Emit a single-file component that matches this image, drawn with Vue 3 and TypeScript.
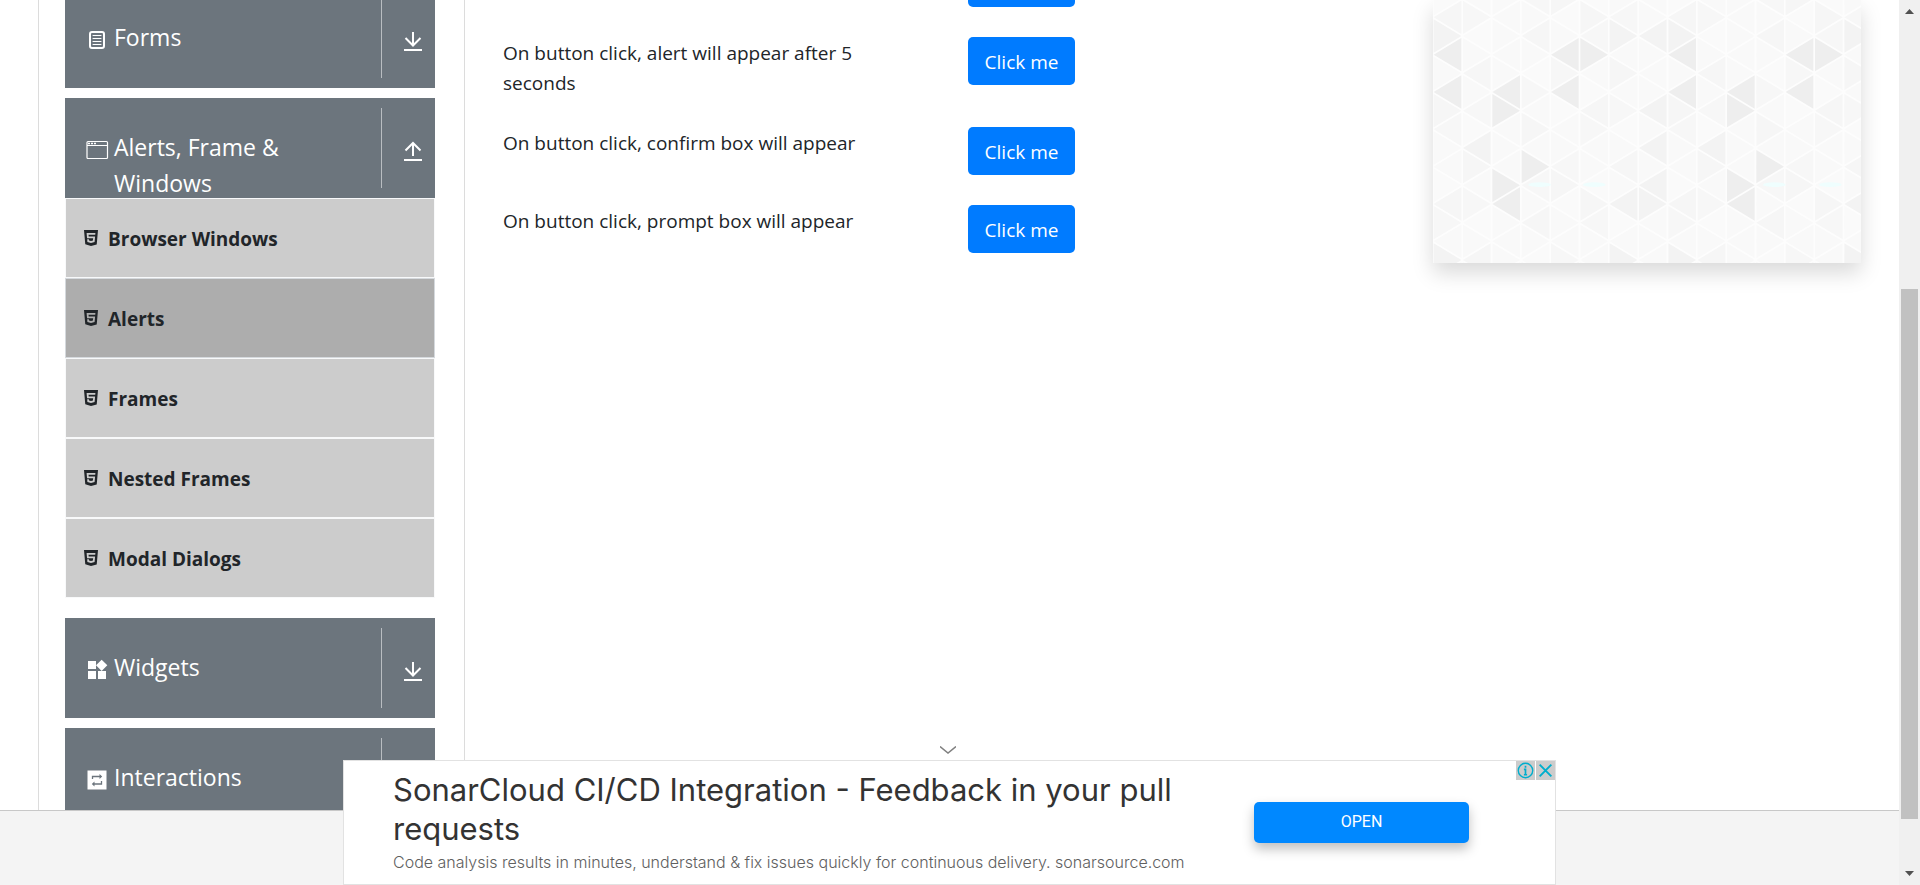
<script setup lang="ts">
import { ref } from 'vue'

type Icon = 'form' | 'window' | 'widgets' | 'repeat'

interface Group {
  title: string
  icon: Icon
  items: string[]
}

const groups: Group[] = [
  { title: 'Forms', icon: 'form', items: [] },
  {
    title: 'Alerts, Frame & Windows',
    icon: 'window',
    items: ['Browser Windows', 'Alerts', 'Frames', 'Nested Frames', 'Modal Dialogs'],
  },
  { title: 'Widgets', icon: 'widgets', items: [] },
  { title: 'Interactions', icon: 'repeat', items: [] },
]

const active = ref('Alerts')

const rows = [
  { id: 'timerAlert', text: 'On button click, alert will appear after 5 seconds' },
  { id: 'confirm', text: 'On button click, confirm box will appear' },
  { id: 'prompt', text: 'On button click, prompt box will appear' },
]

// Triangle mosaic: eight columns form one repeating tile.
const strong = ['0-3', '4-3', '5-3', '0-5', '2-5', '2-6', '4-5', '3-9', '2-10', '2-11']
const medium = ['6-2', '7-2', '0-2', '7-6', '1-8', '7-8', '7-10', '6-11', '7-11', '6-14', '0-14']
const shades = ['#fafafa', '#f7f7f7', '#f9f9f9', '#f6f6f6', '#f9f9f9']
const glints = [320, 484, 1024, 1192]
const cellW = 88
const cellH = 56

const triangles: { points: string; fill: string }[] = []
for (let c = 0; c < 15; c++) {
  for (let r = 0; r < 16; r++) {
    const k = `${c % 8}-${r}`
    const x = c * cellW
    const y = r * cellH - 4
    const points =
      (c + r) % 2
        ? `${x + 2},${y} ${x + 85},${y - 50} ${x + 85},${y + 50}`
        : `${x + 85},${y} ${x + 2},${y - 50} ${x + 2},${y + 50}`
    const fill = strong.includes(k)
      ? '#eeeeee'
      : medium.includes(k)
        ? '#f3f3f3'
        : shades[((c % 8) * 7 + r * 3 + (c % 8) * r) % 5]
    triangles.push({ points, fill })
  }
}
</script>

<template>
  <div class="window">
    <div class="page">
      <main class="body">
        <nav class="sidebar">
          <section v-for="g in groups" :key="g.title" class="group">
            <button class="head" type="button">
              <svg v-if="g.icon === 'form'" class="icon" viewBox="0 0 24 24" fill="none" stroke="#fff">
                <rect x="5" y="4" width="14" height="16" rx="2" stroke-width="2" />
                <path d="M8 7.5h8M8 10.5h8M8 13.5h8M8 16.5h8" stroke-width="1" stroke-linecap="round" />
              </svg>
              <svg v-else-if="g.icon === 'window'" class="icon" viewBox="0 0 24 24" fill="none" stroke="#fff">
                <rect x="2" y="3.5" width="20.500" height="17" rx="1" stroke-width="1.200" />
                <path d="M2 7.500h20" />
                <path d="M3 5.500h2M6 5.500h2M9 5.500h2" stroke-width="1.600" />
              </svg>
              <svg v-else-if="g.icon === 'widgets'" class="icon" viewBox="0 0 24 24" fill="#fff">
                <path d="M13 13v8h8v-8h-8zM3 21h8v-8H3v8zM3 3v8h8V3H3zm13.66-1.31L11 7.34 16.66 13l5.66-5.66-5.66-5.65z" />
              </svg>
              <svg v-else class="icon" viewBox="0 0 24 24" fill="none">
                <rect x="2.500" y="2.500" width="19" height="19" fill="#fff" />
                <path d="M7.500 11V8.500h8M16.500 13v3h-8" stroke="#6c757d" stroke-width="1.300" />
                <path d="M14.500 6l2.700 2.500-2.700 2.500zM9.500 13.500L6.800 16l2.700 2.500z" fill="#6c757d" />
              </svg>
              <span class="title">{{ g.title }}</span>
              <span class="toggle">
                <svg viewBox="0 0 20 20" fill="none" stroke="#fff" stroke-width="2">
                  <path v-if="g.items.length" d="M10 15V2M2.500 9.500L10 2l7.500 7.500M1 19h18" />
                  <path v-else d="M10 1v13M2.500 7l7.500 7.500L17.500 7M1 19h18" />
                </svg>
              </span>
            </button>
            <ul v-if="g.items.length" class="items">
              <li v-for="item in g.items" :key="item">
                <a href="#" :class="{ active: item === active }" @click.prevent="active = item">
                  <svg viewBox="0 0 24 24" fill="#212529">
                    <path d="M1.500 0h21l-1.910 21.563L11.977 24l-8.564-2.438L1.500 0zm7.031 9.750l-.232-2.718 10.059.003.230-2.622L5.412 4.410l.698 8.010h9.126l-.326 3.426-2.910.804-2.955-.810-.188-2.110H6.248l.330 4.171L12 19.351l5.379-1.443.744-8.157H8.531z" />
                  </svg>
                  <span>{{ item }}</span>
                </a>
              </li>
            </ul>
          </section>
        </nav>

        <section class="content">
          <button class="btn previous" type="button" aria-label="Show alert"></button>
          <div v-for="row in rows" :key="row.id" class="row">
            <label :for="row.id">{{ row.text }}</label>
            <button :id="row.id" class="btn" type="button">Click me</button>
          </div>
        </section>

        <aside class="card">
          <svg viewBox="0 0 1284 789" preserveAspectRatio="xMinYMin slice">
            <polygon v-for="(t, i) in triangles" :key="i" :points="t.points" :fill="t.fill" />
            <ellipse v-for="x in glints" :key="x" :cx="x" cy="554" rx="34" ry="7" fill="#effefe" />
          </svg>
        </aside>
      </main>

      <footer class="footer"></footer>

      <div class="anchor">
        <button class="collapse" type="button" aria-label="Collapse">
          <svg viewBox="0 0 16 8" fill="none" stroke="#808080" stroke-width="1.500">
            <path d="M0 .5l8 6.500 8-6.500" />
          </svg>
        </button>
        <div class="ad">
          <div class="copy">
            <h2>SonarCloud CI/CD Integration - Feedback in your pull requests</h2>
            <p>Code analysis results in minutes, understand &amp; fix issues quickly for continuous delivery. sonarsource.com</p>
          </div>
          <a href="#" class="open">OPEN</a>
          <div class="choices">
            <button type="button" aria-label="Ad information">
              <svg viewBox="0 0 16 16" fill="none" stroke="#00aecd" stroke-width="1.300">
                <circle cx="8" cy="8" r="6.800" />
                <path d="M6.500 7H8v5M6.500 12h3M8 3.500v2" stroke-width="1.600" />
              </svg>
            </button>
            <button type="button" aria-label="Close ad">
              <svg viewBox="0 0 16 16" fill="none" stroke="#00aecd" stroke-width="1.800">
                <path d="M2.500 2.500l11 11M13.500 2.500l-11 11" />
              </svg>
            </button>
          </div>
        </div>
      </div>
    </div>

    <div class="scrollbar" aria-hidden="true">
      <svg viewBox="0 0 9 5" fill="#505050"><path d="M0 5h9L4.500 0z" /></svg>
      <div class="track"><div class="thumb"></div></div>
      <svg viewBox="0 0 9 5" fill="#505050"><path d="M0 0h9L4.500 5z" /></svg>
    </div>
  </div>
</template>

<style>
body {
  margin: 0;
}
</style>

<style scoped>
* {
  box-sizing: border-box;
}

.window {
  display: flex;
  height: 100vh;
  overflow: hidden;
  background: #fff;
  color: #212529;
  font-family: "Segoe UI", "Open Sans", "Noto Sans", sans-serif;
  font-size: 19px;
  line-height: 30px;
}

button {
  border: 0;
  padding: 0;
  font: inherit;
  cursor: pointer;
}

svg {
  display: block;
  flex: none;
}

.page {
  position: relative;
  display: flex;
  flex: 1;
  flex-direction: column;
  min-width: 0;
}

.body {
  display: grid;
  flex: 1;
  grid-template-columns: 427px 1fr 428px;
  min-height: 0;
  padding: 0 38px;
  overflow: hidden;
}

.footer {
  flex: none;
  height: 75px;
  border-top: 1px solid #c8c8c8;
  background: #f4f4f4;
}

.sidebar {
  display: flex;
  flex-direction: column;
  gap: 10px;
  margin-top: -12px;
  padding: 0 29px 0 26px;
  border: 1px solid #dcdcdc;
  border-width: 0 1px;
}

.head {
  display: flex;
  width: 100%;
  height: 100px;
  padding: 10px 0 10px 20px;
  background: #6c757d;
  color: #fff;
  font-size: 23px;
  line-height: 36px;
  text-align: left;
}

.icon {
  width: 24px;
  height: 24px;
  margin: 30px 5px 0 0;
}

.title {
  flex: 1;
  padding: 21px 60px 0 0;
}

.toggle {
  display: flex;
  align-items: center;
  justify-content: center;
  width: 54px;
  height: 80px;
  padding: 6px 0 0 8px;
  border-left: 1px solid #b9bdc1;
}

.toggle svg {
  width: 20px;
  height: 20px;
}

.items {
  margin: 0 0 10px;
  padding: 0;
  list-style: none;
}

.items a {
  display: flex;
  align-items: center;
  gap: 9px;
  height: 80px;
  padding: 0 17px;
  border: 1px solid #f8f9fa;
  background: #ccc;
  color: #212529;
  font-weight: 700;
  text-decoration: none;
}

.items a.active {
  border-color: #d5d9dd;
  background: #adadad;
}

.items svg {
  width: 16px;
  height: 16px;
}

.items span {
  padding-top: 2px;
}

.content {
  display: flex;
  flex-direction: column;
  gap: 30px;
  padding-left: 38px;
}

.row {
  display: grid;
  grid-template-columns: 400px 107px;
  column-gap: 65px;
  align-items: start;
}

.row label {
  margin-bottom: -1px;
  padding-top: 1px;
}

.btn {
  height: 48px;
  padding-top: 1px;
  border-radius: 5px;
  background: #007bff;
  color: #fff;
}

.btn.previous {
  width: 107px;
  height: 7px;
  margin-left: 465px;
  border-radius: 0 0 5px 5px;
}

.card {
  align-self: start;
  background: #fdfdfd;
  box-shadow: 0 10px 20px rgba(0, 0, 0, 0.15);
}

.card svg {
  width: 100%;
  height: 263px;
}

.anchor {
  position: absolute;
  right: 0;
  bottom: 0;
  left: 0;
  display: flex;
  flex-direction: column;
  align-items: center;
}

.collapse {
  padding: 6px 12px 6px 8px;
  background: transparent;
}

.collapse svg {
  width: 16px;
  height: 8px;
}

.ad {
  position: relative;
  display: flex;
  align-items: center;
  width: 1213px;
  max-width: 100%;
  height: 125px;
  padding: 0 86px 0 49px;
  border: 1px solid #e2e2e2;
  background: #fff;
  font-family: "Google Sans", Inter, sans-serif;
}

.copy {
  flex: 1;
}

h2 {
  max-width: 800px;
  margin: 0;
  color: #333;
  font-size: 31px;
  font-weight: 400;
  line-height: 39px;
}

p {
  margin: 0;
  color: #606060;
  font-size: 16px;
  font-weight: 300;
  line-height: 28px;
}

.open {
  width: 215px;
  padding-bottom: 1px;
  border-radius: 5px;
  background: #08f;
  box-shadow: 0 6px 12px rgba(0, 0, 0, 0.25);
  color: #fff;
  font-family: Roboto, sans-serif;
  font-size: 16px;
  line-height: 40px;
  text-align: center;
  text-decoration: none;
}

.choices {
  position: absolute;
  top: 0;
  right: 0;
  display: flex;
  gap: 1px;
}

.choices button {
  display: grid;
  place-items: center;
  width: 19px;
  height: 19px;
  background: #ccc;
}

.choices svg {
  width: 17px;
  height: 17px;
}

.scrollbar {
  display: flex;
  flex: none;
  flex-direction: column;
  align-items: center;
  justify-content: space-between;
  width: 21px;
  padding: 9px 0;
  background: #f0f0f0;
}

.scrollbar svg {
  width: 9px;
  height: 5px;
}

.track {
  flex: 1;
  width: 17px;
  padding: 275px 0 52px;
}

.thumb {
  height: 100%;
  background: #c1c1c1;
}
</style>
